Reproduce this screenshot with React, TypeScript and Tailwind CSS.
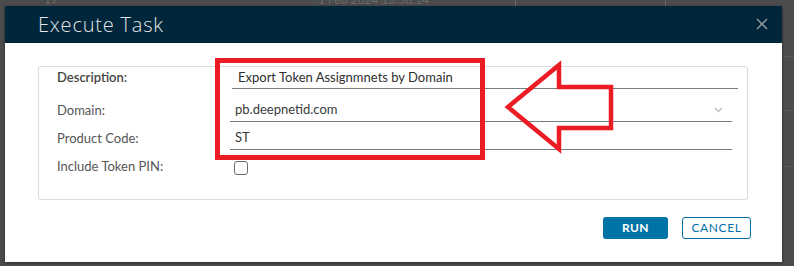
import React from "react";

const font = { fontFamily: "Lato, 'Open Sans', Arial, sans-serif" };

export default function App() {
  return (
    <div
      className="relative w-[794px] h-[266px] overflow-hidden bg-[#4c4c4c]"
      style={font}
    >
      {/* backdrop table remnants */}
      <div className="absolute left-0 top-0 w-full h-full pointer-events-none">
        <div className="absolute left-[44px] top-[-9px] text-[12px] text-[#6b6b6b]">17</div>
        <div className="absolute left-[318px] top-[-9px] text-[12px] text-[#6b6b6b]">1 Feb 2024 13:58:14</div>
        <div className="absolute left-[515px] top-0 w-px h-[6px] bg-[#6a6a6a]" />
        <div className="absolute left-[665px] top-0 w-px h-[6px] bg-[#6a6a6a]" />
        <div className="absolute left-[782px] top-[56px] w-[12px] h-px bg-[#5a5a5a]" />
        <div className="absolute left-[782px] top-[110px] w-[12px] h-px bg-[#5a5a5a]" />
        <div className="absolute left-[782px] top-[166px] w-[12px] h-px bg-[#5a5a5a]" />
      </div>

      {/* modal */}
      <div className="relative ml-[5px] mt-[6px] w-[777px] h-[256px] bg-white shadow-[0_1px_3px_rgba(0,0,0,0.5)] flex flex-col">
        <div className="h-[37px] bg-[#00263b] flex items-center justify-between pl-[33px] pr-[14px]">
          <span
            className="text-[20px] font-light text-[#e2e5e7] leading-none tracking-[0.8px]"
            style={{ fontFamily: "'Open Sans', Arial, sans-serif" }}
          >
            Execute Task
          </span>
          <svg width="12" height="12" viewBox="0 0 12 12" className="mb-[1px]">
            <path d="M1 1 L11 11 M11 1 L1 11" stroke="#9aa3a9" strokeWidth="1.3" fill="none" />
          </svg>
        </div>

        <div className="flex-1 pl-[33px] pr-[31px] pt-[23px]">
          <div className="w-[710px] h-[134px] border border-[#dcdcdc] rounded-[3px] pl-[18px]">
            {/* Description */}
            <div className="flex h-[22px]">
              <div className="w-[175px] flex items-center text-[13px] font-semibold text-[#454545]">Description:</div>
              <div className="w-[506px] border-b border-[#737d83] flex items-center pl-[6px] text-[13px] text-[#2f2f2f]">
                Export Token Assignmnets by Domain
              </div>
            </div>
            {/* Domain */}
            <div className="flex h-[23px] mt-[10px]">
              <div className="w-[173px] flex items-center text-[13px] text-[#555]">Domain:</div>
              <div className="w-[502px] border-b border-[#737d83] flex items-center justify-between pl-[5px] pr-[9px] text-[13px] text-[#3a3a3a]">
                <span>pb.deepnetid.com</span>
                <svg width="9" height="6" viewBox="0 0 9 6">
                  <path d="M1 1 L4.5 4.5 L8 1" stroke="#b5b5b5" strokeWidth="1.1" fill="none" />
                </svg>
              </div>
            </div>
            {/* Product Code */}
            <div className="flex h-[23px] mt-[5px]">
              <div className="w-[173px] flex items-center text-[13px] text-[#555]">Product Code:</div>
              <div className="w-[502px] border-b border-[#737d83] flex items-center pl-[5px] text-[13px] text-[#3a3a3a]">ST</div>
            </div>
            {/* Include Token PIN */}
            <div className="flex h-[15px] mt-[11px]">
              <div className="w-[177px] flex items-center text-[13px] text-[#555] -mt-[3px]">Include Token PIN:</div>
              <div className="w-[14px] h-[14px] border border-[#6d6d6d] rounded-[3px] bg-white" />
            </div>
          </div>

          <div className="flex justify-end gap-[14px] mt-[17px]">
            <button className="w-[65px] h-[22px] rounded-[3px] bg-[#0073a6] text-white text-[12px] font-bold tracking-[0.4px] flex items-center justify-center">
              RUN
            </button>
            <button className="w-[69px] h-[22px] rounded-[3px] border border-[#0073a6] bg-white text-[#0073a6] text-[12px] tracking-[0.6px] flex items-center justify-center">
              CANCEL
            </button>
          </div>
        </div>
      </div>

      {/* red annotation overlay */}
      <svg className="absolute left-0 top-0 pointer-events-none" width="794" height="266">
        <rect x="217.5" y="60.5" width="265" height="97" fill="none" stroke="#ec1c24" strokeWidth="5" />
        <polygon
          points="508,107 559,65 559,87 611,87 611,128 559,128 559,149"
          fill="none"
          stroke="#ec1c24"
          strokeWidth="4.5"
          strokeLinejoin="miter"
        />
      </svg>
    </div>
  );
}
